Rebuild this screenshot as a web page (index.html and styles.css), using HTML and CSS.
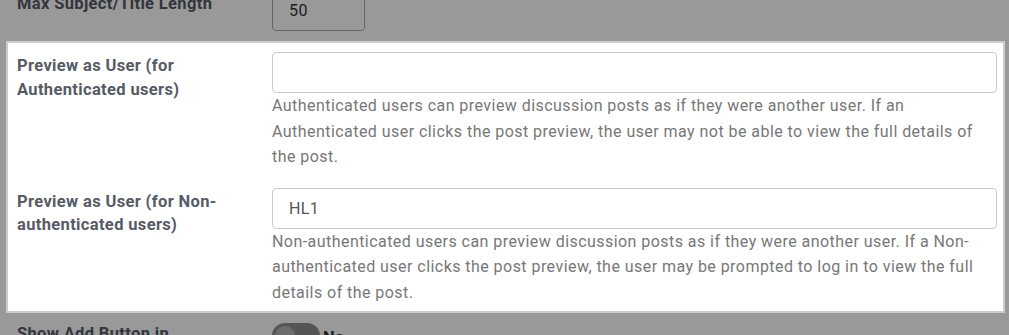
FILE: index.html
```html
<!DOCTYPE html>
<html lang="en">
<head>
    <meta charset="UTF-8">
    <meta name="viewport" content="width=device-width, initial-scale=1.0">
    <title>Discussion Settings</title>
    <link rel="stylesheet" href="styles.css">
</head>
<body>
    <form class="settings">
        <div class="row">
            <label class="row-label" for="max-length">Max Subject/Title Length</label>
            <div class="row-control">
                <input type="text" id="max-length" class="field field-small" value="50">
            </div>
        </div>

        <!-- highlighted step of the tour -->
        <div class="highlight">
            <div class="row">
                <label class="row-label" for="preview-auth">Preview as User (for Authenticated users)</label>
                <div class="row-control">
                    <input type="text" id="preview-auth" class="field" value="">
                    <p class="help">Authenticated users can preview discussion posts as if they were another user. If an Authenticated user clicks the post preview, the user may not be able to view the full details of the post.</p>
                </div>
            </div>

            <div class="row">
                <label class="row-label" for="preview-anon">Preview as User (for Non-authenticated users)</label>
                <div class="row-control">
                    <input type="text" id="preview-anon" class="field" value="HL1">
                    <p class="help">Non-authenticated users can preview discussion posts as if they were another user. If a Non-authenticated user clicks the post preview, the user may be prompted to log in to view the full details of the post.</p>
                </div>
            </div>
        </div>

        <div class="row">
            <label class="row-label" for="show-add">Show Add Button in</label>
            <div class="row-control toggle-wrap">
                <span class="toggle"><span class="knob"></span></span>
                <span class="toggle-text">No</span>
            </div>
        </div>
    </form>
</body>
</html>
```

FILE: styles.css
```css
* {
    margin: 0;
    padding: 0;
    box-sizing: border-box;
    font-family: 'Roboto', 'Liberation Sans', sans-serif;
}

html, body {
    height: 100%;
    overflow: hidden;
}

body {
    background: #fff;
}

.settings {
    margin-top: -19px;
}

.row {
    display: flex;
    padding: 9px 5px 9px 17px;
}

.row-label {
    flex: 0 0 255px;
    padding: 2px 25px 0 0;
    font-size: 16.5px;
    font-weight: 700;
    letter-spacing: 0.35px;
    line-height: 23.5px;
    color: #555b65;
}

.row-control {
    flex: 1;
    padding-right: 6px;
}

.field {
    display: block;
    width: 100%;
    height: 41px;
    padding: 0 16px;
    border: 1px solid #ccc;
    border-radius: 4px;
    font-size: 16px;
    letter-spacing: 0.4px;
    color: #555;
    background: #fff;
}

.field-small {
    width: 93px;
    color: #333;
    border-color: #aaa;
}

.help {
    max-width: 706px;
    font-size: 16px;
    letter-spacing: 0.45px;
    line-height: 25.5px;
    color: #777;
}

/* the tour highlight: everything else is dimmed by its shadow */
.highlight {
    position: relative;
    z-index: 1;
    margin: 3px 6px 0 8px;
    background: #fff;
    box-shadow: 0 0 0 2px rgba(255, 255, 255, 0.5), 0 0 0 3000px rgba(0, 0, 0, 0.4);
}

.highlight .row {
    padding-left: 9px;
    padding-right: 0;
}

.highlight .row + .row {
    padding-top: 9px;
}

.highlight .row:last-child {
    padding-bottom: 6px;
}

.toggle-wrap {
    display: flex;
    align-items: flex-start;
    gap: 3px;
    padding-top: 3px;
}

.toggle {
    display: inline-block;
    width: 48px;
    height: 26px;
    border-radius: 13px;
    background: #8e8e8e;
    padding: 3px;
}

.knob {
    display: block;
    width: 20px;
    height: 20px;
    border-radius: 50%;
    background: #b5b5b5;
}

.toggle-text {
    font-size: 16.5px;
    font-weight: 700;
    color: #333;
    line-height: 30px;
}
```
